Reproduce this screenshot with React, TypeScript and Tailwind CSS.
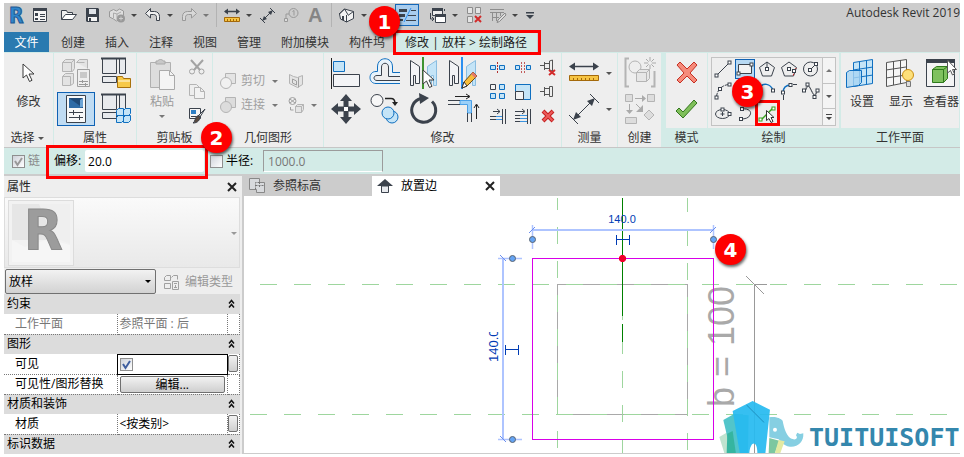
import {useState} from "react";
import type {ReactNode} from "react";

type IconProps = {
  w?: number;
  h?: number;
  children: ReactNode;
};

// Icons are drawn on a pixel grid, so one unit is one pixel
function Icon({w = 16, h = 16, children}: IconProps) {
  return (
    <svg
      width={w}
      height={h}
      viewBox={`0 0 ${w} ${h}`}
      fill="none"
      className="block shrink-0 overflow-visible"
      aria-hidden="true"
    >
      {children}
    </svg>
  );
}

const DARK = "#3b424c";
const GRAY = "#b4b4b4";
const BLUE = "#0f6fc0";
const PALE = "#c4e4f7";

function Caret({color = "#555", size = 8}: {color?: string; size?: number}) {
  return (
    <Icon w={size} h={8}>
      <path d={`M${size / 2 - 3} 3h6l-3 3z`} fill={color} />
    </Icon>
  );
}

/* ---------- quick access toolbar ---------- */

type ToolProps = {
  label: string;
  menu?: boolean;
  muted?: boolean;
  children: ReactNode;
};

function Tool({label, menu, muted, children}: ToolProps) {
  return (
    <div className="flex items-center gap-1">
      <button type="button" aria-label={label}>
        {children}
      </button>
      {menu && (
        <button type="button" aria-label={`${label} ▾`}>
          <Caret color={muted ? "#777" : "#444"} />
        </button>
      )}
    </div>
  );
}

function Divider() {
  return <div className="h-6 w-px bg-[#b3b3b3]" />;
}

function QuickAccess() {
  return (
    <div className="flex h-[29px] items-start justify-between pl-1">
      <div className="flex h-6 items-center gap-1.5">
        <Tool label="Revit">
          <Icon w={18} h={22}>
            <text
              x="1"
              y="19"
              fontSize="21"
              fontWeight="700"
              fill="#2f86cc"
              stroke="#1d5a94"
              strokeWidth="1"
              className="font-['DejaVu_Sans_Condensed','DejaVu_Sans',sans-serif]"
            >
              R
            </text>
          </Icon>
        </Tool>
        <Tool label="属性">
          <Icon w={18}>
            <path d="M1.500 1.500h13v13h-13z" fill="#f4f4f4" stroke={DARK} />
            <path d="M1 1h14v3H1zM3 6h3v3H3zM3 11h3v2H3z" fill={DARK} />
            <path d="M8 7.500h5M8 9.500h5M8 12.500h5" stroke={DARK} />
          </Icon>
        </Tool>
        <div className="ml-1">
          <Tool label="打开">
            <Icon w={18}>
              <path
                d="M1.500 12.500v-9h5l1 2h5v2"
                fill="#f0f0f0"
                stroke={DARK}
              />
              <path
                d="M1.500 12.500l4-5h11l-4 5z"
                fill="#fff"
                stroke={DARK}
                strokeLinejoin="round"
              />
            </Icon>
          </Tool>
        </div>
        <Tool label="保存">
          <Icon w={18}>
            <path d="M2 1h12l1 1v13H3l-1-1z" fill={DARK} />
            <path d="M5 2h7v5H5z" fill="#dfe3e8" />
            <path d="M4 10h9v4H4z" fill="#f4f4f4" />
            <path d="M5 11h2v3H5z" fill={DARK} />
          </Icon>
        </Tool>
        <Tool label="同步" menu>
          <Icon w={18}>
            <path
              d="M1.500 4.500l4-2 3 1.500 3-2 4 2v4l-3 4-4 2-3-2-4-2z"
              fill="#dedede"
              stroke="#999"
            />
            <path d="M5.500 6v5M9 7v6M5.500 6L9 7l4-2" stroke="#aaa" />
            <circle cx="13" cy="11.500" r="4" fill="#999" />
            <path d="M11 11.500h4M13 9.500v4" stroke="#ccc" />
          </Icon>
        </Tool>
        <Tool label="放弃" menu>
          <Icon w={18}>
            <path
              d="M1.500 6.500l5-5v3h4c3 0 5 2 5 5v4h-3v-3c0-2-1-3-3-3h-3v3.500z"
              fill="#f0f0f0"
              stroke={DARK}
              strokeLinejoin="round"
            />
          </Icon>
        </Tool>
        <Tool label="重做" menu muted>
          <Icon w={18}>
            <path
              d="M16.500 6.500l-5-5v3h-4c-3 0-5 2-5 5v4h3v-3c0-2 1-3 3-3h3v3.500z"
              fill="#d8d8d8"
              stroke="#999"
              strokeLinejoin="round"
            />
          </Icon>
        </Tool>
        <Divider />
        <Tool label="测量" menu>
          <Icon w={18}>
            <path d="M2 4.500h13" stroke={DARK} strokeWidth="1.500" />
            <path d="M1 4.500l4-3v6zM17 4.500l-4-3v6z" fill={DARK} />
            <path d="M1.500 10.500h15v4h-15z" fill="#f6c443" stroke="#a4690a" />
            <path d="M4.500 12v2M7.500 12v2M10.500 12v2M13.500 12v2" stroke="#a4690a" />
          </Icon>
        </Tool>
        <Tool label="对齐尺寸标注">
          <Icon w={18}>
            <path d="M3 14L14 3M1 11l5 5M11 1l5 5" stroke={DARK} />
            <path d="M3 14l2-5 3 3zM14 3l-5 2 3 3z" fill={DARK} />
          </Icon>
        </Tool>
        <Tool label="按类别标记">
          <Icon w={18}>
            <circle cx="10.500" cy="6" r="4.500" stroke="#999" />
            <path d="M9.500 4.500l1.500-1v5M6 7H3v6" stroke="#999" />
            <path d="M1.500 11.500h3v3h-3z" fill="#ddd" stroke="#999" />
          </Icon>
        </Tool>
        <Tool label="文字">
          <Icon w={18} h={20}>
            <text
              x="1"
              y="17"
              fontSize="20"
              fontWeight="700"
              fill="#858585"
              className="font-['Liberation_Sans',Arial,sans-serif]"
            >
              A
            </text>
          </Icon>
        </Tool>
        <Divider />
        <Tool label="默认三维视图" menu>
          <Icon w={18}>
            <path
              d="M1.500 7l5-5 9 2.500v7l-7 3.500-6-3z"
              fill="#f2f2f2"
              stroke={DARK}
              strokeLinejoin="round"
            />
            <path d="M1 7l5.500-5 4 6.500M8.500 15V8M10.500 8l5-3.500" stroke={DARK} />
            <path d="M4 9h2v4H4z" fill={DARK} />
          </Icon>
        </Tool>
        <Tool label="剖面">
          <Icon w={15}>
            <circle cx="7" cy="8" r="5" stroke={DARK} />
          </Icon>
        </Tool>
        <button
          type="button"
          aria-label="细线"
          className="flex h-[22px] w-6 items-center justify-center border border-[#1467b8] bg-[#a9cdee]"
        >
          <Icon w={22} h={20}>
            <path d="M3 4h8v3H3zM3 9h6v3H3zM3 14h4v2H3z" fill={DARK} />
            <path d="M8 17L15 3" stroke="#2b8ff0" />
            <path d="M15 5.500h5M12 10.500h8M10 15.500h10" stroke={DARK} />
          </Icon>
        </button>
        <div className="ml-1">
          <Tool label="切换窗口" menu>
            <Icon w={18} h={18}>
              <path d="M3.500 2.500h10v7h-10z" fill="#eee" stroke={DARK} />
              <path d="M3 2h11v3H3z" fill={DARK} />
              <path d="M6.500 8.500h10v8h-10z" fill="#fff" stroke={DARK} />
              <path d="M6 8h11v3H6z" fill={DARK} />
              <path d="M1.500 7v6h3M3 11l2 2-2 2M15.500 5V3" stroke={DARK} />
            </Icon>
          </Tool>
        </div>
        <Tool label="关闭隐藏对象">
          <Icon w={18} h={18}>
            <path
              d="M2.500 1.500h5v6h-5zM10.500 1.500h5v6h-5zM2.500 10.500h5v6h-5z"
              fill="#e4e4e4"
              stroke="#8d8d8d"
            />
            <path d="M10 10l6 6M16 10l-6 6" stroke="#d22a2a" strokeWidth="2" />
          </Icon>
        </Tool>
        <Tool label="用户界面" menu>
          <Icon w={18}>
            <path d="M1 2.500h14M1 5.500h14M3.500 5v9M7.500 5v9M11.500 5v4M3 10.500h7" stroke="#8d8d8d" />
            <path d="M16 6L9 13l-1 2.500 2.500-1L17 8z" fill="#ddd" stroke="#888" />
          </Icon>
        </Tool>
        <button type="button" aria-label="自定义快速访问工具栏">
          <Icon w={10}>
            <path d="M1 5h8v1.500H1zM1 8h8l-4 4z" fill={DARK} />
          </Icon>
        </button>
      </div>
      <h1 className="whitespace-nowrap pt-px text-[12px] leading-[18px] text-[#333]">
        Autodesk Revit 2019
      </h1>
    </div>
  );
}

/* ---------- ribbon tabs ---------- */

const tabs = ["创建", "插入", "注释", "视图", "管理", "附加模块", "构件坞"];

function RibbonTabs() {
  return (
    <nav className="flex h-5 text-[12px] leading-[22px] text-[#333]">
      <button type="button" className="mr-0.5 w-[45px] bg-[#2a7ab0] text-white">
        文件
      </button>
      {tabs.map((tab) => (
        <button key={tab} type="button" className="whitespace-nowrap px-2.5">
          {tab}
        </button>
      ))}
      <button
        type="button"
        className="whitespace-nowrap bg-[#d3ebe7] px-2.5 text-[#222]"
      >
        修改 | 放样 &gt; 绘制路径
      </button>
    </nav>
  );
}

/* ---------- ribbon panels ---------- */

type PanelProps = {
  title: ReactNode;
  className: string;
  context?: boolean;
  children: ReactNode;
};

function Panel({title, className, context, children}: PanelProps) {
  return (
    <section
      className={`flex shrink-0 flex-col border-r border-[#d3ebe7] bg-[#eee] ${className}`}
    >
      <div className="h-[75px] overflow-hidden">{children}</div>
      <h2
        className={`flex h-[19px] items-center justify-center whitespace-nowrap text-[12px] text-[#333] ${
          context ? "bg-[#d3ebe7]" : ""
        }`}
      >
        {title}
      </h2>
    </section>
  );
}

function IconButton({label, children}: {label: string; children: ReactNode}) {
  return (
    <button
      type="button"
      aria-label={label}
      className="flex items-center justify-center"
    >
      {children}
    </button>
  );
}

function CursorShape() {
  return (
    <path
      d="M1 1v14l3.500-3 3 6.500 2.500-1.200-3-6.300h5z"
      fill="#fff"
      stroke="#3b3b3b"
      strokeLinejoin="round"
    />
  );
}

function PropertiesPanel() {
  return (
    <Panel title="属性" className="w-[83px]">
      <div className="grid grid-cols-[38px_38px] grid-rows-[34px_34px] gap-x-0.5 gap-y-0.5 pl-[3px] pt-[3px]">
        <IconButton label="类型属性">
          <Icon w={32} h={32}>
            <path
              d="M2.500 5.500l3-3h9v9l-2 3h-10zM16.500 5.500l3-3h8v9M2.500 19.500l3-3h8v10l-3 2h-8z"
              fill="#e3e3e3"
              stroke={GRAY}
            />
            <path d="M2.500 5.500h9v9M16.500 5.500h8M11.500 5.500l3-3M2.500 19.500h8v9" stroke={GRAY} />
            <path d="M17.500 12.500h12v17h-12z" fill="#eee" stroke="#a0a0a0" />
            <path d="M20 15h7v6h-7z" fill="#c8c8c8" />
            <path d="M19 24.500h9M19 27.500h9M22.500 23v3M25.500 26v3" stroke="#999" />
          </Icon>
        </IconButton>
        <IconButton label="族类别和族参数">
          <Icon w={32} h={32}>
            <path
              d="M2.500 1.500h14v15h-14zM19.500 1.500h6v15h-6zM2.500 19.500h14v6h-14z"
              fill="#e8eaed"
              stroke={DARK}
            />
            <path d="M1 1.500h25" stroke={DARK} strokeWidth="2" />
            <path d="M17.500 19.500h5l1 2h7v9h-13z" fill="#f7c948" stroke="#a8710c" />
            <path d="M18 24h12" stroke="#fbe29a" strokeWidth="2" />
          </Icon>
        </IconButton>
        <button
          type="button"
          aria-label="属性"
          aria-pressed="true"
          className="flex items-center justify-center border border-[#0f62b4] bg-[#c0dcf3]"
        >
          <Icon w={24} h={30}>
            <path d="M2.500 1.500h19v27h-19z" fill="#f8f8f8" stroke={DARK} />
            <path d="M5 4h14v10H5z" fill="#2e6ba6" />
            <path d="M5 4h14v10z" fill="#1f4a78" />
            <path d="M16 6v7h3V4z" fill="#6ba4d6" />
            <path d="M5 18.500h14M5 23.500h14M9.500 16v5M15.500 21v5" stroke={DARK} />
          </Icon>
        </button>
        <IconButton label="族类型">
          <Icon w={32} h={32}>
            <path
              d="M2.500 1.500h14v15h-14zM19.500 1.500h6v15h-6zM2.500 19.500h14v6h-14z"
              fill="#e8eaed"
              stroke={DARK}
            />
            <path d="M1 1.500h25" stroke={DARK} strokeWidth="2" />
            <path
              d="M16.500 17.500l2-2h5v7h-7zM23.500 17.500l2-2h5v5l-2 2h-5zM16.500 24.500l2-2h5v5l-2 2h-5zM23.500 24.500l2-2h5v5l-2 2h-5z"
              fill={PALE}
              stroke={BLUE}
            />
          </Icon>
        </IconButton>
      </div>
    </Panel>
  );
}

function ClipboardPanel() {
  return (
    <Panel title="剪贴板" className="w-[76px]">
      <div className="flex gap-3 pl-[11px]">
        <button
          type="button"
          disabled
          className="flex flex-col items-center pt-[5px] text-[12px] leading-5 text-[#9a9a9a]"
        >
          <Icon w={28} h={34}>
            <path d="M2.500 4.500h20v25h-20z" fill="#ddd" stroke="#b0b0b0" />
            <path d="M8 6V3h2c0-2 5-2 5 0h2v3z" fill="#c8c8c8" stroke="#aaa" />
            <path d="M11.500 12.500h10l5 5v14h-15z" fill="#f4f4f4" stroke="#aaa" />
            <path d="M21.500 12.500v5h5" stroke="#aaa" />
          </Icon>
          粘贴
          <Caret color="#777" />
        </button>
        <div className="flex flex-col gap-2 pt-[6px]">
          <IconButton label="剪切">
            <Icon w={18}>
              <path d="M3 1l9 10M15 1L6 11" stroke="#a3a3a3" strokeWidth="2" />
              <circle cx="4" cy="12.500" r="2.500" stroke="#a3a3a3" />
              <circle cx="13.500" cy="12.500" r="2.500" stroke="#a3a3a3" />
            </Icon>
          </IconButton>
          <IconButton label="复制">
            <Icon w={18}>
              <path d="M1.500 1.500h7l3 3v8h-10z" fill="#eee" stroke={GRAY} />
              <path d="M6.500 4.500h6l4 4v7h-10zM12.500 4.500v4h4" fill="#f2f2f2" stroke={GRAY} />
            </Icon>
          </IconButton>
          <IconButton label="匹配类型属性">
            <Icon w={18} h={18}>
              <path d="M1.500 1.500h11v10h-11z" fill="#f6f6f6" stroke={DARK} />
              <path d="M3 3h5v4H3z" fill="#2e7fc4" />
              <path d="M3 9.500h5M17 2l-7 8" stroke={DARK} />
              <path d="M17 2l-5 8-2-1z" fill="#eee" stroke={DARK} />
              <path d="M12 9c0 4-2 7-7 7 2-1 2-5 4-7z" fill="#5a4a3e" stroke={DARK} />
            </Icon>
          </IconButton>
        </div>
      </div>
    </Panel>
  );
}

function GeometryPanel() {
  return (
    <Panel title="几何图形" className="w-[111px]">
      <div className="grid grid-cols-[58px_auto] gap-x-2.5 gap-y-1 pl-[7px] pt-[18px] text-[12px] leading-5 text-[#a0a0a0]">
        <button type="button" disabled className="flex items-center gap-1">
          <Icon w={17}>
            <path d="M5.500 .5h10v10h-10z" fill="#e4e4e4" stroke={GRAY} />
            <circle cx="6" cy="10" r="5.500" fill="#f1f1f1" stroke={GRAY} />
          </Icon>
          <span className="whitespace-nowrap">剪切</span>
          <span className="ml-0.5">
            <Caret color="#777" />
          </span>
        </button>
        <div className="flex items-center">
          <IconButton label="拆分面">
            <Icon>
              <path d="M1.500 1.500l4 2 4 1 5-2v9l-5 3-8-4z" fill="#e4e4e4" stroke={GRAY} />
              <path d="M4.500 6l4 2v4l-4-2zM10.500 4.500v10" stroke="#a0a0a0" />
            </Icon>
          </IconButton>
        </div>
        <button type="button" disabled className="flex items-center gap-1">
          <Icon w={17}>
            <path d="M5.500 .5h10v10h-10z" fill="#dcdcdc" stroke={GRAY} />
            <circle cx="6" cy="10" r="5.500" fill="#dcdcdc" stroke={GRAY} />
          </Icon>
          <span className="whitespace-nowrap">连接</span>
          <span className="ml-0.5">
            <Caret color="#777" />
          </span>
        </button>
        <div className="flex items-center gap-1.5">
          <IconButton label="连接端切割">
            <Icon>
              <circle cx="4.500" cy="4" r="3.500" stroke="#a0a0a0" />
              <path d="M2 2l5 4M7 2L2 6M2.500 10v3h3" stroke="#a0a0a0" />
              <path d="M7.500 9.500l2-2h6v5l-2 3h-6zM7.500 9.500h6v6M13.500 9.500l2-2" fill="#e4e4e4" stroke={GRAY} />
            </Icon>
          </IconButton>
          <Caret color="#777" />
        </div>
      </div>
    </Panel>
  );
}

function ModifyPanel() {
  return (
    <Panel title="修改" className="w-[238px]">
      <div className="flex gap-2.5 pl-[6px] pt-[3px]">
        <div className="grid grid-cols-[32px_32px_32px_32px] grid-rows-[34px_34px] gap-x-[7px] gap-y-0.5">
          <IconButton label="对齐">
            <Icon w={32} h={32}>
              <path d="M1.500 1v31" stroke="#222" />
              <path d="M3.500 4.500h11v10h-11z" fill={PALE} stroke={BLUE} />
              <path d="M3.500 17.500h26v12h-26z" fill="#f3f4f6" stroke={DARK} />
            </Icon>
          </IconButton>
          <IconButton label="偏移">
            <Icon w={32} h={32}>
              <path
                d="M31 15.500h-7.500V10c0-11-15-11-15 0v4.500H7c-8 0-8 12 0 12h24"
                fill="#e8f3fb"
                stroke={BLUE}
              />
              <path
                d="M31 19.500H19.500V10c0-5-7-5-7 0v8.500H8c-4 0-4 5 0 5h23"
                fill="#eee"
                stroke={DARK}
              />
            </Icon>
          </IconButton>
          <IconButton label="镜像 - 拾取轴">
            <Icon w={32} h={32}>
              <path d="M2.500 3.500l9 6v17h-4v-8h-2v10h-3z" fill="#f3f4f6" stroke={DARK} />
              <path d="M28.500 3.500l-9 6v17h4v-8h2v10h3z" fill={PALE} stroke="#8abde0" />
              <path d="M15 0v32" stroke="#3f9430" strokeWidth="2" />
              <g transform="translate(14 12)">
                <CursorShape />
              </g>
            </Icon>
          </IconButton>
          <IconButton label="镜像 - 绘制轴">
            <Icon w={32} h={32}>
              <path d="M2.500 3.500l9 6v17h-4v-8h-2v10h-3z" fill="#f3f4f6" stroke={DARK} />
              <path d="M28.500 3.500l-9 6v17h4v-8h2v10h3z" fill={PALE} stroke="#8abde0" />
              <path d="M15 0v32" stroke="#2b8ff0" strokeWidth="2" />
              <path d="M26 15l4 4-10 10-5 2 2-6z" fill="#f7bd3a" stroke="#6d4a12" />
              <path d="M17 25l-2 6 5-2z" fill="#fff" stroke="#333" />
              <path d="M26 15l4 4-2 2-4-4z" fill="#e57a6d" />
            </Icon>
          </IconButton>
          <IconButton label="移动">
            <Icon w={32} h={32}>
              <path
                d="M16 1l6 7h-3.500v5h-5V8H10zM16 31l6-7h-3.500v-5h-5v5H10zM1 16l7-6v3.500h5v5H8V22zM31 16l-7-6v3.500h-5v5h5V22z"
                fill={DARK}
              />
              <path d="M13.500 13.500h5v5h-5z" fill="#fff" stroke={DARK} />
            </Icon>
          </IconButton>
          <IconButton label="复制">
            <Icon w={32} h={32}>
              <circle cx="8" cy="7.500" r="6" fill="#f7f7f7" stroke={DARK} />
              <path d="M16 5.500h6c3 0 4 2 4 5" stroke="#222" strokeWidth="1.500" />
              <path d="M23 9h6l-3 4z" fill="#222" />
              <circle cx="23" cy="24" r="6" fill={PALE} stroke={BLUE} />
              <circle cx="19" cy="20" r="6" fill={PALE} stroke={BLUE} />
            </Icon>
          </IconButton>
          <IconButton label="旋转">
            <Icon w={32} h={32}>
              <path
                d="M24 8.500a12 12 0 1 1-11-3"
                stroke={DARK}
                strokeWidth="3"
              />
              <path d="M11 0l10 5-9 6z" fill={DARK} />
            </Icon>
          </IconButton>
          <IconButton label="修剪/延伸为角">
            <Icon w={32} h={32}>
              <path d="M8 3.500h14M19 1l4 2.500L19 6M29.500 26V12M27 15l2.500-4 2.500 4" stroke="#222" />
              <path d="M13 7.500h11.500V20h-4v-8.500H13z" fill="#9bd0f8" stroke="#4aa0e8" />
              <path d="M1 7.500h12M1 11.500h12M20.500 20v9M24.500 20v9" stroke={DARK} />
            </Icon>
          </IconButton>
        </div>
        <div className="grid grid-cols-[18px_18px_18px] grid-rows-[24px_24px_24px] gap-x-[7px]">
          <IconButton label="拆分图元">
            <Icon w={18}>
              <path d="M1.500 5.500h5v4h-5zM10.500 5.500h5v4h-5z" fill={PALE} stroke={BLUE} />
              <path d="M8.500 2v12" stroke="#b03030" strokeDasharray="2 1" />
            </Icon>
          </IconButton>
          <IconButton label="用间隙拆分">
            <Icon w={18}>
              <path d="M1.500 5.500h4v4h-4zM12.500 5.500h4v4h-4z" fill={PALE} stroke={BLUE} />
              <path d="M7.500 2v12M10.500 2v12" stroke="#c25a5a" strokeDasharray="2 1" />
            </Icon>
          </IconButton>
          <IconButton label="解锁">
            <Icon w={18} h={18}>
              <path d="M1 6.500h4M5.500 3v8M5.500 4.500h5M5.500 9.500h5M10.500 2v9l3 1V1z" stroke="#555" />
              <path d="M10 11l6 5M16 11l-6 5" stroke="#d22a2a" strokeWidth="2" />
            </Icon>
          </IconButton>
          <IconButton label="阵列">
            <Icon w={18}>
              <path d="M1.500.5h5v5h-5z" fill="#f3f3f3" stroke={DARK} />
              <path d="M10.500.5h5v5h-5zM1.500 9.500h5v5h-5zM10.500 9.500h5v5h-5z" fill={PALE} stroke={BLUE} />
            </Icon>
          </IconButton>
          <IconButton label="缩放">
            <Icon w={18}>
              <path d="M1.500.5h15v15h-15z" fill={PALE} stroke={BLUE} />
              <path d="M1.500 7.500h8v8h-8z" fill="#f3f3f3" stroke={DARK} />
            </Icon>
          </IconButton>
          <IconButton label="锁定">
            <Icon w={18}>
              <path d="M1 7.500h4M5.500 3v9M5.500 4.500h5M5.500 10.500h5M10.500 2.500h3v10h-3z" stroke="#555" />
            </Icon>
          </IconButton>
          <IconButton label="修剪/延伸单个图元">
            <Icon w={18}>
              <path d="M4 3.500h7M8 1l3 2.500L8 6M1 8.500h6M1 11.500h6M13.500 1v15M16.500 1v15" stroke={DARK} />
              <path d="M7 8.500h6M7 11.500h6" stroke="#3a93e0" />
            </Icon>
          </IconButton>
          <IconButton label="修剪/延伸多个图元">
            <Icon w={18}>
              <path d="M1 3.500h9M8 1l3 2.500L8 6M1 7.500h5M1 10.500h5M1 13.500h5M13.500 1v15M16.500 1v15" stroke={DARK} />
              <path d="M6 7.500h7M6 10.500h7M6 13.500h7" stroke="#3a93e0" />
            </Icon>
          </IconButton>
          <IconButton label="删除">
            <Icon w={18}>
              <path d="M4 3l10 10M14 3L4 13" stroke="#c31e1e" strokeWidth="4" />
              <path d="M4.500 3.500l9 9M13.500 3.500l-9 9" stroke="#ee5a5a" strokeWidth="2" />
            </Icon>
          </IconButton>
        </div>
      </div>
    </Panel>
  );
}

function MeasurePanel() {
  return (
    <Panel title="测量" className="w-14">
      <div className="grid grid-cols-[32px_8px] grid-rows-[34px_34px] items-center gap-x-[5px] gap-y-0.5 pl-[6px] pt-[3px]">
        <IconButton label="测量">
          <Icon w={32} h={24}>
            <path d="M4 5.500h24" stroke={DARK} strokeWidth="1.500" />
            <path d="M1 5.500l6-4v8zM31 5.500l-6-4v8z" fill={DARK} />
            <path d="M1.500 14.500h29v5h-29z" fill="#f6c443" stroke="#a4690a" />
            <path d="M5.500 17v2M9.500 17v2M13.500 17v2M17.500 17v2M21.500 17v2M25.500 17v2" stroke="#a4690a" />
          </Icon>
        </IconButton>
        <Caret />
        <IconButton label="尺寸标注">
          <Icon w={32} h={32}>
            <path d="M6 26L26 6M1 22l9 9M22 1l9 9" stroke={DARK} />
            <path d="M5 27l3-8 5 5zM27 5l-8 3 5 5z" fill={DARK} />
          </Icon>
        </IconButton>
        <Caret />
      </div>
    </Panel>
  );
}

function CreatePanel() {
  return (
    <Panel title="创建" className="w-11">
      <div className="grid grid-rows-[34px_34px] justify-center gap-y-0.5 pt-[3px]">
        <IconButton label="创建组">
          <Icon w={32} h={32}>
            <path d="M5 1.500H1.500v28H5M27 29.500h3.500V14" stroke={GRAY} strokeWidth="2" />
            <circle cx="11" cy="10" r="6" fill="#eee" stroke={GRAY} />
            <path d="M12.500 15.500l3-3h10v9l-3 3h-10zM12.500 15.500h10v9M22.500 15.500l3-3" fill="#e6e6e6" stroke={GRAY} />
            <path d="M26 0v12M20 6h12M22 2l8 8M30 2l-8 8" stroke="#aaa" />
            <circle cx="26" cy="6" r="2" fill="#eee" />
          </Icon>
        </IconButton>
        <IconButton label="创建类似">
          <Icon w={32} h={32}>
            <path d="M1.500 1.500h7v7h-7zM23.500 1.500h7v7h-7zM1.500 24.500h11v6h-11zM25 17l5 5-5 5-5-5z" fill="#ddd" stroke={GRAY} />
            <path d="M11 5.500h8M5.500 11v7M12 11l5 5" stroke="#aaa" />
            <path d="M18 2l4 3.500L18 9zM2 17h7l-3.500 4zM19 12v7h-7z" fill="#aaa" />
          </Icon>
        </IconButton>
      </div>
    </Panel>
  );
}

function ModePanel() {
  return (
    <Panel title="模式" context className="w-[46px] border-l-4">
      <div className="grid grid-rows-[34px_34px] justify-center gap-y-0.5 pt-[3px]">
        <IconButton label="取消编辑模式">
          <Icon w={24} h={24}>
            <path
              d="M2 4l3-3 7 7 7-7 3 3-7 8 7 7-3 3-7-7-7 7-3-3 7-7z"
              fill="#f58b7b"
              stroke="#c62f22"
            />
          </Icon>
        </IconButton>
        <IconButton label="完成编辑模式">
          <Icon w={24} h={24}>
            <path d="M1 14l3-3 4 4L19 3l3 3L8 21z" fill="#7fbf5a" stroke="#33761d" />
          </Icon>
        </IconButton>
      </div>
    </Panel>
  );
}

// Small square grip at the end of a sketch line
function Grip({x, y}: {x: number; y: number}) {
  return (
    <rect x={x - 1.5} y={y - 1.5} width="3" height="3" fill="#fff" stroke={DARK} />
  );
}

function DrawPanel() {
  return (
    <Panel title="绘制" context className="w-[132px]">
      <div className="px-[3px] pt-1">
        <div className="flex h-[69px] border border-[#c3c3c3]">
          <div className="grid flex-1 grid-cols-5 grid-rows-3 items-center justify-items-center">
            <IconButton label="线">
              <Icon w={18} h={18}>
                <path d="M3 15L15 3" stroke={DARK} />
                <Grip x={2.5} y={15.5} />
                <Grip x={15.5} y={2.5} />
              </Icon>
            </IconButton>
            <button
              type="button"
              aria-label="矩形"
              aria-pressed="true"
              className="flex h-5 w-5 items-center justify-center border border-[#0f62b4] bg-[#b7d9f3]"
            >
              <Icon w={18} h={18}>
                <path d="M2.500 4.500h13v9h-13z" fill="#f2f2f2" stroke={DARK} />
                <Grip x={2.5} y={13.5} />
                <Grip x={15.5} y={4.5} />
              </Icon>
            </button>
            <IconButton label="内接多边形">
              <Icon w={18} h={18}>
                <path d="M9 2l7.500 5.500-3 8.500h-9l-3-8.500z" stroke={DARK} />
                <path d="M9 2v7" stroke={DARK} />
                <Grip x={9} y={9} />
              </Icon>
            </IconButton>
            <IconButton label="外接多边形">
              <Icon w={18} h={18}>
                <path d="M9 2l7.500 5.500-3 8.500h-9l-3-8.500z" stroke={DARK} />
                <path d="M16 8l-3 8" stroke="#d22a2a" strokeDasharray="2 1" />
                <Grip x={9} y={9} />
                <Grip x={14} y={11} />
              </Icon>
            </IconButton>
            <IconButton label="圆形">
              <Icon w={18} h={18}>
                <circle cx="8.500" cy="9" r="7" stroke={DARK} />
                <path d="M8 10l6-6" stroke={DARK} />
                <Grip x={8} y={10} />
                <Grip x={14} y={4} />
              </Icon>
            </IconButton>
            <IconButton label="起点-终点-半径弧">
              <Icon w={18} h={18}>
                <path d="M2.500 15C3 8 8 3 15 2.500" stroke={DARK} strokeDasharray="4 1" />
                <Grip x={2.5} y={15.5} />
                <Grip x={6} y={7} />
                <Grip x={15.5} y={2.5} />
              </Icon>
            </IconButton>
            <IconButton label="圆心-端点弧">
              <Icon w={18} h={18}>
                <path d="M2.500 15C3 8 8 3 15 2.500" stroke={BLUE} />
              </Icon>
            </IconButton>
            <IconButton label="相切-端点弧">
              <Icon w={18} h={18}>
                <path d="M2 5c3-4 10-4 13 3" stroke={BLUE} strokeWidth="1.500" />
                <Grip x={15} y={8.5} />
              </Icon>
            </IconButton>
            <IconButton label="圆角弧">
              <Icon w={18} h={18}>
                <path d="M3 11c0-5 3-8 8-8" stroke={BLUE} strokeWidth="1.500" />
                <path d="M3.500 13v5M13 2.500h4" stroke={DARK} />
                <Grip x={3} y={10.5} />
                <Grip x={10.5} y={3} />
              </Icon>
            </IconButton>
            <IconButton label="样条曲线">
              <Icon w={18} h={18}>
                <path d="M2 8.500l4-6 7 12 3-6" stroke="#aaa" />
                <path d="M1.500 8c3 3 3-5 5-4s4 9 6 9 2-5 3-5" stroke={DARK} />
                <Grip x={2} y={8.5} />
                <Grip x={5.5} y={2.5} />
                <Grip x={12.5} y={15} />
                <Grip x={15.5} y={8.5} />
              </Icon>
            </IconButton>
            <IconButton label="椭圆">
              <Icon w={18} h={18}>
                <ellipse cx="8.500" cy="9" rx="7" ry="4.500" stroke={DARK} />
                <path d="M8.500 7v4M6.500 9h4" stroke={DARK} />
                <Grip x={15.5} y={9} />
                <Grip x={8.5} y={4.5} />
              </Icon>
            </IconButton>
            <IconButton label="半椭圆">
              <Icon w={18} h={18}>
                <path d="M6 4c7-1 10 3 8 6-1 3-5 4-9 4" stroke={DARK} />
                <Grip x={6} y={4} />
                <Grip x={5} y={14} />
              </Icon>
            </IconButton>
            <IconButton label="拾取线">
              <Icon w={18} h={18}>
                <path d="M3 15L15 3" stroke="#36a01c" strokeWidth="1.500" />
                <rect x="1" y="13" width="3" height="3" fill="#fff" stroke="#36a01c" />
                <rect x="14" y="2" width="3" height="3" fill="#fff" stroke="#36a01c" />
                <path
                  d="M8.500 5.500v10l2.500-2 2 4 2-1-2-4h3z"
                  fill="#fff"
                  stroke="#333"
                />
              </Icon>
            </IconButton>
          </div>
          <div className="flex w-[13px] flex-col border-l border-[#c3c3c3]">
            <button
              type="button"
              aria-label="上一行"
              className="flex flex-1 items-center justify-center bg-[#f4f4f4]"
            >
              <Icon w={8} h={8}>
                <path d="M1 6h6L4 3z" fill="#777" />
              </Icon>
            </button>
            <button
              type="button"
              aria-label="下一行"
              className="flex flex-1 items-center justify-center border-y border-[#c3c3c3] bg-[#f4f4f4]"
            >
              <Caret />
            </button>
            <button
              type="button"
              aria-label="更多"
              className="flex h-4 items-center justify-center bg-[#f4f4f4]"
            >
              <Icon w={8} h={8}>
                <path d="M1 1h6v1H1zM1 4h6L4 7z" fill="#444" />
              </Icon>
            </button>
          </div>
        </div>
      </div>
    </Panel>
  );
}

function WorkPlanePanel() {
  return (
    <Panel title="工作平面" context className="min-w-0 flex-1 border-l">
      <div className="flex gap-[5px] pl-1 pt-[5px] text-[12px] leading-[22px] text-[#333]">
        <button type="button" className="w-[34px] whitespace-nowrap">
          <Icon w={32} h={33}>
            <path d="M8.500 4.500l19-3v24l-19 3z" fill={PALE} stroke={BLUE} />
            <path
              d="M14.500 4v24M21.500 2v24M8 12l20-3M8 20l20-3"
              stroke={BLUE}
            />
            <path
              d="M1.500 14.500l3-2h12v12l-3 3-12 2z"
              fill="#a8d4f3"
              fillOpacity="0.8"
              stroke={BLUE}
            />
          </Icon>
          设置
        </button>
        <button type="button" className="w-[34px] whitespace-nowrap">
          <Icon w={32} h={33}>
            <path d="M2.500 4.500l20-3v23l-20 4z" fill="#f6f6f6" stroke="#555" />
            <path d="M9.500 3v24M16.500 2v24M2 12l20-3M2 20l20-3" stroke="#555" />
            <circle cx="24" cy="17" r="5.500" fill="#fde07a" stroke="#c98e12" />
            <path d="M22.500 23.500h4v5h-4z" fill="#ddd" stroke="#777" />
          </Icon>
          显示
        </button>
        <button type="button" className="w-9 whitespace-nowrap">
          <Icon w={34} h={33}>
            <path d="M3.500 1.500h28v27h-28z" fill="#f4f4f4" stroke={DARK} />
            <path d="M3 1h29v4H3z" fill={DARK} />
            <path d="M9.500 11.500l4-3h11v12l-4 4h-11z" fill="#7fc15e" stroke="#2f7a1c" />
            <path d="M9.500 11.500h11v13M20.500 11.500l4-3" stroke="#2f7a1c" />
            <path d="M24.500 2v13l3-2.500 2 4.500 2-1-2-4.500h4z" fill="#fff" stroke="#555" />
          </Icon>
          查看器
        </button>
      </div>
    </Panel>
  );
}

function Ribbon() {
  return (
    <div className="flex overflow-hidden border-t border-[#d3ebe7] bg-[#eee]">
      <Panel
        className="w-[50px]"
        title={
          <>
            选择 <Caret size={12} />
          </>
        }
      >
        <button
          type="button"
          className="flex w-full flex-col items-center pt-2.5 text-[12px] leading-[18px] text-[#333]"
        >
          <Icon w={14} h={30}>
            <CursorShape />
          </Icon>
          修改
        </button>
      </Panel>
      <PropertiesPanel />
      <ClipboardPanel />
      <GeometryPanel />
      <ModifyPanel />
      <MeasurePanel />
      <CreatePanel />
      <ModePanel />
      <DrawPanel />
      <WorkPlanePanel />
    </div>
  );
}

/* ---------- options bar ---------- */

type CheckProps = {
  id: string;
  checked: boolean;
  disabled?: boolean;
  color: string;
  onChange?: (value: boolean) => void;
};

function Check({id, checked, disabled, color, onChange}: CheckProps) {
  return (
    <span className="relative block h-[13px] w-[13px] shrink-0">
      <input
        id={id}
        type="checkbox"
        checked={checked}
        disabled={disabled}
        onChange={(e) => onChange?.(e.target.checked)}
        className="block h-[13px] w-[13px] appearance-none border border-[#8f8f8f] bg-linear-to-br from-[#cfd3da] to-white"
      />
      {checked && (
        <span className="pointer-events-none absolute inset-0">
          <Icon w={13} h={13}>
            <path d="M3 6l2.500 4L10 3" stroke={color} strokeWidth="2" />
          </Icon>
        </span>
      )}
    </span>
  );
}

function OptionsBar() {
  const [useRadius, setUseRadius] = useState(false);
  const [offset, setOffset] = useState("20.0");

  return (
    <div className="flex h-[27px] items-center border-t border-[#c6c6c6] bg-[#d3ebe7] pl-2 text-[12px] text-black">
      <Check id="chain" checked disabled color="#999" />
      <label htmlFor="chain" className="ml-[3px] text-[#8a8a8a]">
        链
      </label>
      <label htmlFor="offset" className="ml-3.5 w-[31px] whitespace-nowrap">
        偏移:
      </label>
      <input
        id="offset"
        value={offset}
        onChange={(e) => setOffset(e.target.value)}
        className="h-[22px] w-[119px] rounded-xs bg-white px-[3px]"
      />
      <div className="ml-1.5">
        <Check
          id="use-radius"
          checked={useRadius}
          color="#3a5a9a"
          onChange={setUseRadius}
        />
      </div>
      <label htmlFor="use-radius" className="ml-[3px] w-[37px] whitespace-nowrap">
        半径:
      </label>
      <input
        aria-label="半径"
        defaultValue="1000.0"
        disabled={!useRadius}
        className="h-[22px] w-[120px] border border-t-[#9b9b9b] border-r-[#9b9b9b] border-b-white border-l-[#9b9b9b] bg-[#d3ebe7] px-1 text-[#777]"
      />
    </div>
  );
}

/* ---------- properties palette ---------- */

function GroupRow({title}: {title: string}) {
  return (
    <tr className="h-5 bg-[#dcdcdc]">
      <th colSpan={2} scope="colgroup" className="pl-[3px] text-left font-normal">
        {title}
      </th>
      <td>
        <button type="button" aria-label={`折叠 ${title}`} className="block">
          <Icon w={8} h={10}>
            <path
              d="M1 4.500l2.500-3 2.500 3M1 8.500l2.500-3 2.500 3"
              stroke="#111"
              strokeWidth="1.500"
            />
          </Icon>
        </button>
      </td>
    </tr>
  );
}

type PropRowProps = {
  name: string;
  muted?: boolean;
  extra?: boolean;
  focused?: boolean;
  children: ReactNode;
};

function PropRow({name, muted, extra, focused, children}: PropRowProps) {
  return (
    <tr className={`h-5 bg-white ${muted ? "text-[#777]" : ""}`}>
      <th
        scope="row"
        className="whitespace-nowrap border-b border-r border-dotted border-[#777] pl-[11px] text-left font-normal"
      >
        {name}
      </th>
      <td
        className={
          focused
            ? "border border-black px-0.5"
            : "border-b border-r border-dotted border-[#777] px-0.5"
        }
      >
        {children}
      </td>
      <td className="border-b border-r border-dotted border-[#777]">
        {extra && (
          <button
            type="button"
            aria-label={`关联 ${name}`}
            className="block h-[17px] w-[10px] rounded-xs border border-[#707070] bg-linear-to-b from-[#f2f2f2] to-[#cfcfcf]"
          />
        )}
      </td>
    </tr>
  );
}

function PropertiesPalette() {
  const [visible, setVisible] = useState(true);

  return (
    <aside className="w-60 shrink-0 border-r-2 border-[#ccc] bg-[#eee] pr-0.5 text-[12px] text-black">
      <header className="flex h-[21px] items-center justify-between pl-[3px] pr-0.5">
        <h2 className="text-[#222]">属性</h2>
        <button type="button" aria-label="关闭属性" className="block">
          <Icon w={12} h={12}>
            <path d="M2 2l8 8M10 2l-8 8" stroke="#222" strokeWidth="2" />
          </Icon>
        </button>
      </header>
      <button
        type="button"
        aria-label="类型选择器"
        className="flex h-[71px] w-full items-center justify-between border border-[#ddd] bg-linear-to-b from-[#fafafa] to-[#e9e9e9] pl-[3px] pr-px"
      >
        <span className="border border-[#dcdcdc] bg-[#f2f2f2]">
          <Icon w={64} h={64}>
            <path d="M3 3h58v36H3z" fill="#e6e6e6" />
            <path d="M30 3h31v40L44 36z" fill="#efefef" />
            <path d="M16 46l24-8 21 6v17H3V39z" fill="#f6f6f6" />
            <text
              x="15"
              y="48"
              fontSize="56"
              fontWeight="700"
              fill="#9c9c9c"
              stroke="#8a8a8a"
              strokeWidth="1"
              className="font-['DejaVu_Sans_Condensed','DejaVu_Sans',sans-serif]"
            >
              R
            </text>
          </Icon>
        </span>
        <Caret color="#999" />
      </button>
      <div className="flex h-[26px] items-center gap-[7px] pl-px pt-px">
        <div className="relative w-[151px]">
          <select
            aria-label="类型"
            className="block h-[25px] w-full appearance-none rounded-xs border border-[#707070] bg-linear-to-b from-[#f2f2f2] to-[#d2d2d2] pl-[3px]"
          >
            <option>放样</option>
          </select>
          <span className="pointer-events-none absolute right-1 top-2">
            <Caret color="#000" />
          </span>
        </div>
        <button
          type="button"
          disabled
          className="flex items-center gap-[5px] whitespace-nowrap text-[#999]"
        >
          <Icon w={17}>
            <path
              d="M1.500 3.500l2-2h4v5h-6zM8.500 3.500l2-2h4v4M1.500 9.500h6v5h-6zM9.500 7.500h6v8h-6z"
              stroke="#a0a0a0"
            />
            <path d="M11 9.500h3M11 13.500h3M12.500 11v2" stroke="#a0a0a0" />
          </Icon>
          编辑类型
        </button>
      </div>
      <table className="w-full table-fixed border-collapse leading-[18px]">
        <colgroup>
          <col className="w-[113px]" />
          <col />
          <col className="w-3" />
        </colgroup>
        <tbody>
          <GroupRow title="约束" />
          <PropRow name="工作平面" muted>
            参照平面 : 后
          </PropRow>
          <GroupRow title="图形" />
          <PropRow name="可见" extra focused>
            <label htmlFor="visible" className="sr-only">
              可见
            </label>
            <Check
              id="visible"
              checked={visible}
              color="#3f5f9f"
              onChange={setVisible}
            />
          </PropRow>
          <PropRow name="可见性/图形替换">
            <button
              type="button"
              className="block h-[17px] w-full rounded-xs border border-[#707070] bg-linear-to-b from-[#f2f2f2] to-[#cfcfcf] text-[12px] leading-[15px]"
            >
              编辑...
            </button>
          </PropRow>
          <GroupRow title="材质和装饰" />
          <PropRow name="材质" extra>
            &lt;按类别&gt;
          </PropRow>
          <GroupRow title="标识数据" />
        </tbody>
      </table>
    </aside>
  );
}

/* ---------- drawing area ---------- */

function ViewTabs() {
  return (
    <nav className="flex h-5 bg-[#ccc] text-[12px] leading-5 text-[#333]">
      <button type="button" className="flex w-32 items-center gap-2 pl-[5px]">
        <Icon>
          <path d="M.5.5h10v4h5v10h-8v-3h-7z" fill="#d8dadd" stroke="#888" />
          <path d="M10.500 4.500h-4v7M6.500 7.500h9M10.500 4v6" stroke="#777" strokeDasharray="2 1" />
        </Icon>
        参照标高
      </button>
      <div className="flex w-32 items-center justify-between bg-white pl-[5px] pr-1">
        <button type="button" className="flex items-center gap-2 text-black">
          <Icon>
            <path d="M8 1l8 7H0z" fill={DARK} />
            <path d="M4.500 8h7v6.500h-7z" fill="#e8eaee" stroke={DARK} />
          </Icon>
          放置边
        </button>
        <button type="button" aria-label="关闭视图">
          <Icon w={12} h={12}>
            <path d="M2 2l8 8M10 2l-8 8" stroke="#222" strokeWidth="2" />
          </Icon>
        </button>
      </div>
    </nav>
  );
}

function Elephant() {
  return (
    <g transform="translate(236 -6) scale(0.3333)">
      <path d="M718 741l24-14 18 65h-26z" fill="#bfe3cf" />
      <path d="M730 690l32-18 44 4-2 116h-50z" fill="#3fbfc4" opacity=".9" />
      <path d="M742 731l16-8 10 69h-28z" fill="#35b5a0" />
      <path
        d="M868 682c16-4 34 2 40 10 4 22 12 52 32 56 10 2 14-6 8-12l4-8 8 4 10-2c2 26-16 42-40 40-22-2-28-18-34-22l-28-6z"
        fill="#86cfe2"
      />
      <circle cx="885" cy="719" r="6" fill="#fff" />
      <path d="M868 744l30 8-14 40h-18z" fill="#7cc7a0" />
      <path d="M896 750l18 4-14 38h-16z" fill="#e3eaa2" />
      <path
        d="M758 663l60-30 52 26-14 133h-24c2-42-22-42-24 0h-28z"
        fill="#27baf0"
        opacity=".93"
      />
      <path d="M800 645l52 52" stroke="#1a7fae" strokeWidth="2" />
    </g>
  );
}

function Handle({x, y}: {x: number; y: number}) {
  return <circle cx={x} cy={y} r="3" fill="#64a4f4" stroke="#5a6472" />;
}

function Canvas() {
  return (
    <svg
      className="block h-[257px] w-full bg-white font-['Liberation_Sans',Arial,sans-serif]"
      role="img"
      aria-label="放置边"
    >
      {/* reference profile */}
      <rect x="313.5" y="88.5" width="130" height="130" fill="none" stroke="#a9a9a9" />

      {/* reference planes */}
      <g stroke="#9ed69e" strokeDasharray="17 17">
        <path d="M16 88.500h700M6 218.500h710" />
        <path d="M313.500 2v255" strokeDashoffset="5" />
        <path d="M443.500 2v255" strokeDashoffset="3" />
        <path d="M378.500 2v255" strokeDashoffset="31" />
      </g>
      <path d="M378.500 2v118M378.500 128v18" stroke="#008000" />

      {/* labelled dimension */}
      <path
        d="M510.500 88v169M510 88.500h13M502 80l18 18M502 209l18 18"
        stroke="#999"
        fill="none"
      />
      <text
        x="0"
        y="0"
        fontSize="36"
        fill="#a9a9a9"
        transform="translate(490 211) rotate(-90)"
      >
        b = 100
      </text>

      {/* temporary dimensions */}
      <g stroke="#aec4ff" fill="none">
        <path d="M288 34h182M259 62v182" strokeWidth="2" />
        <path
          d="M288.500 29v24M469.500 29v24M254 62.500h24M254 243.500h24"
          strokeWidth="1.500"
        />
      </g>
      <path
        d="M285 37l6-6M466 37l6-6M256 59l6 6M256 240l6 6"
        stroke="#6b8ff0"
      />
      <g fill="#003cb4">
        <text x="378" y="27" fontSize="11" textAnchor="middle">
          140.0
        </text>
        <svg x="240" y="136" width="20" height="32">
          <text x="0" y="0" fontSize="13" transform="translate(14 30) rotate(-90)">
            140.0
          </text>
        </svg>
      </g>
      <path
        d="M372.500 39v10M385.500 39v10M373 43.500h12M261.500 149v10M274.500 149v10M262 153.500h12"
        stroke="#003cb4"
      />

      {/* sketched path */}
      <rect x="288.5" y="62.5" width="181" height="181" fill="none" stroke="#d800e8" />
      <Handle x={288.5} y={43.5} />
      <Handle x={469.5} y={43.5} />
      <Handle x={268.5} y={62.5} />
      <Handle x={268.5} y={243.5} />
      <path d="M377 59h3l2 2v3l-2 2h-3l-2-2v-3z" fill="#f0002a" />

      <Elephant />
      <text
        x="565"
        y="250"
        fontSize="25"
        fontWeight="700"
        fill="#3487ad"
        className="font-['DejaVu_Sans_Mono',monospace]"
      >
        TUITUISOFT
      </text>
    </svg>
  );
}

/* ---------- tutorial callouts ---------- */

function Step({n, className}: {n: number; className: string}) {
  return (
    <span
      className={`absolute flex h-[31px] w-[31px] items-center justify-center rounded-full bg-[#fe0000] font-['DejaVu_Sans',Verdana,sans-serif] text-[20px] font-bold leading-none text-white shadow-[1px_2px_3px_rgba(0,0,0,0.6)] ${className}`}
    >
      {n}
    </span>
  );
}

function Frame({className}: {className: string}) {
  return (
    <span
      className={`pointer-events-none absolute border-3 border-[#fe0000] ${className}`}
    />
  );
}

export default function App() {
  return (
    <div className="bg-white px-1 pb-1 pt-[3px] font-['Open_Sans','Noto_Sans_CJK_SC',sans-serif]">
      <div className="relative overflow-hidden bg-[#ccc]">
        <QuickAccess />
        <RibbonTabs />
        <Ribbon />
        <OptionsBar />
        <main className="mt-0.5 flex">
          <PropertiesPalette />
          <div className="min-w-0 flex-1">
            <ViewTabs />
            <Canvas />
          </div>
        </main>

        <Frame className="left-[389px] top-[27px] h-[25px] w-[148px]" />
        <Frame className="left-[42px] top-[142px] h-[34px] w-[162px]" />
        <Frame className="left-[751px] top-[97px] h-[26px] w-[25px]" />
        <Step n={1} className="left-[365px] top-[3px]" />
        <Step n={2} className="left-[197px] top-[119px]" />
        <Step n={3} className="left-[728px] top-[73px]" />
        <Step n={4} className="left-[711px] top-[231px]" />
      </div>
    </div>
  );
}
